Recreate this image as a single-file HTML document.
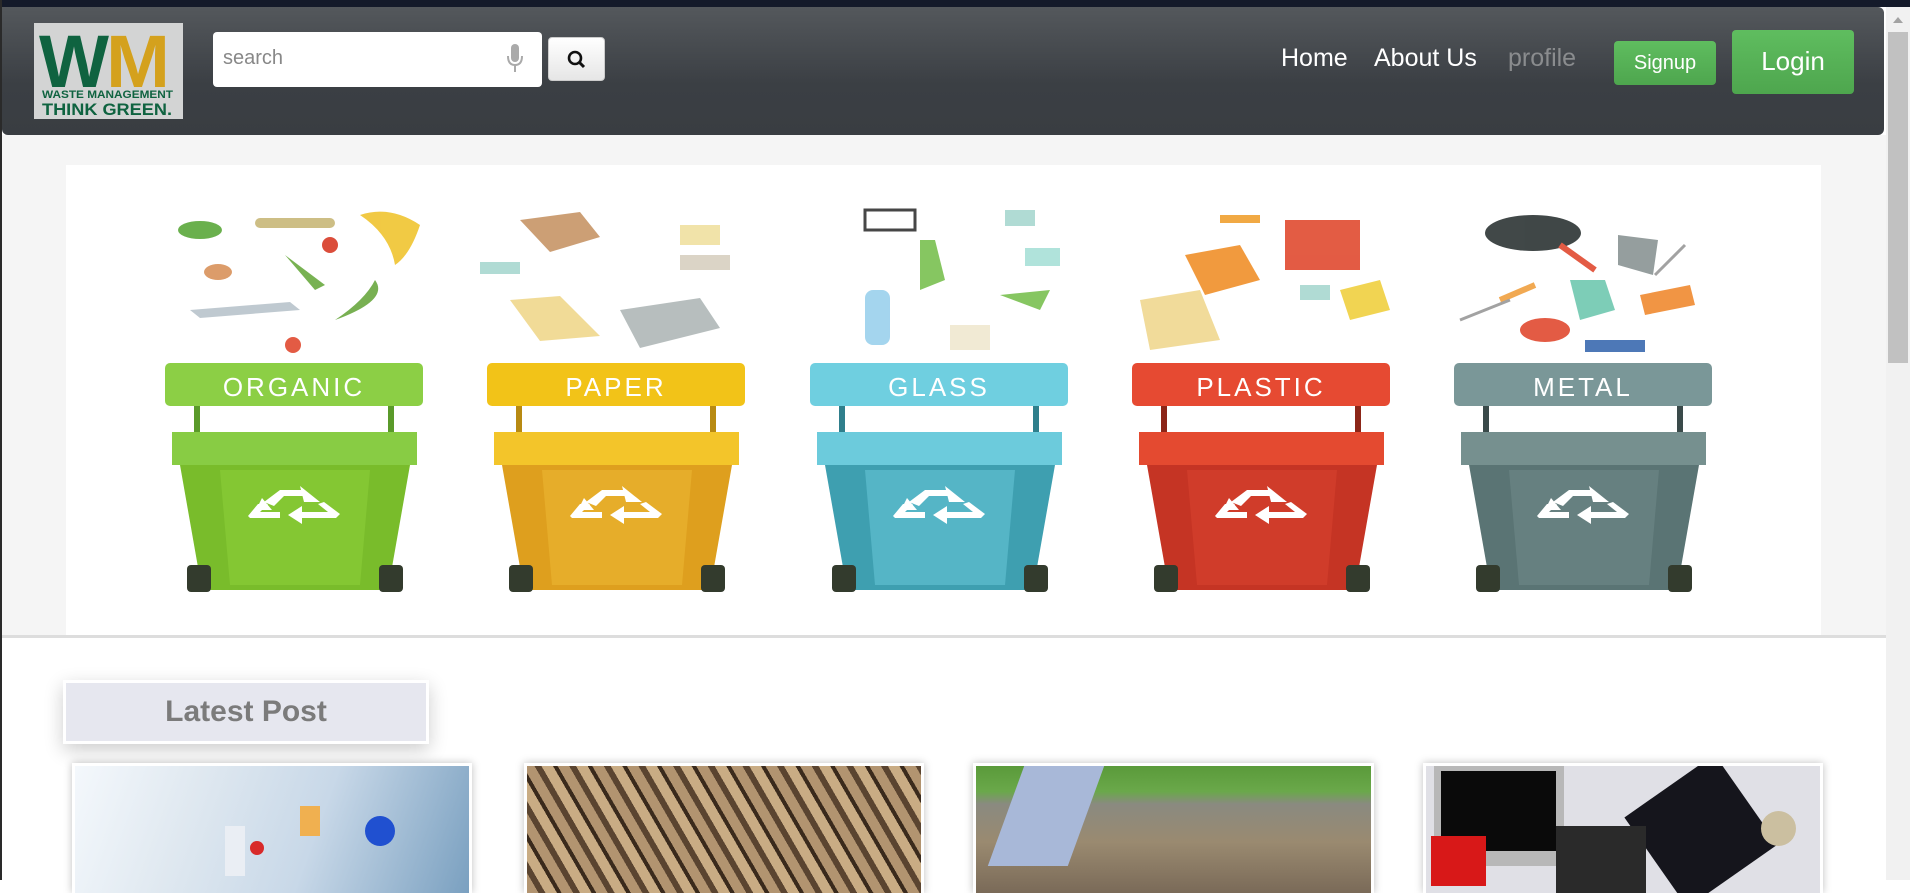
<!DOCTYPE html>
<html><head><meta charset="utf-8"><style>
*{margin:0;padding:0;box-sizing:border-box}
body{width:1910px;height:880px;overflow:hidden;background:#fff;font-family:"Comic Sans MS","Liberation Sans",sans-serif;position:relative}
.abs{position:absolute}
.top{left:0;top:0;width:1910px;height:7px;background:#141a2a}
.lb{left:0;top:0;width:2px;height:880px;background:#2a2a2a}
.hdr{left:2px;top:7px;width:1882px;height:128px;background:linear-gradient(#54585c,#3b3f44 60%,#393d42);border-radius:0 0 6px 6px;border-top-right-radius:6px}
.logo{left:34px;top:23px;width:149px;height:96px;background:#d3d4d4}
.search{left:213px;top:32px;width:329px;height:55px;background:#fff;border-radius:4px;font:20px "Liberation Sans",sans-serif;color:#888;padding:15px 10px}
.sbtn{left:548px;top:37px;width:57px;height:44px;background:linear-gradient(#fff,#e6e6e6);border-radius:4px;border:1px solid #ccc}
.nav{top:44px;font-size:25px;color:#fff}
.btn{background:linear-gradient(#5fbd5f,#4ea64e);color:#fff;border-radius:4px;text-align:center}
.sb{left:1886px;top:7px;width:24px;height:873px;background:#f1f1f1}
.thumb{left:1888px;top:32px;width:20px;height:331px;background:#c1c1c1}
.card{background:#fff;box-shadow:0 0 8px rgba(0,0,0,.25);padding:3px 3px 0 3px;height:130px}
.card>div{width:100%;height:127px;position:relative;overflow:hidden}
</style></head><body>
<div class="abs top"></div>
<div class="abs hdr"></div>
<div class="abs logo">
<svg width="149" height="96" viewBox="0 0 149 96">
<text x="5" y="64" font-family="Liberation Sans" font-weight="bold" font-size="74" fill="#0f6340" textLength="70" lengthAdjust="spacingAndGlyphs">W</text>
<text x="72" y="64" font-family="Liberation Sans" font-weight="bold" font-size="74" fill="#d4a11d" textLength="64" lengthAdjust="spacingAndGlyphs">M</text>
<text x="8" y="75" font-family="Liberation Sans" font-weight="bold" font-size="11" fill="#0f6340" textLength="131" lengthAdjust="spacingAndGlyphs">WASTE MANAGEMENT</text>
<text x="8" y="92" font-family="Liberation Sans" font-weight="bold" font-size="17" fill="#0f6340" textLength="130" lengthAdjust="spacingAndGlyphs">THINK GREEN.</text>
</svg></div>
<div class="abs search">search
<svg class="abs" style="left:293px;top:12px" width="18" height="30" viewBox="0 0 18 30"><rect x="5" y="0" width="8" height="18" rx="4" fill="#aaa"/><path d="M2 12 q0 9 7 9 q7 0 7-9" stroke="#aaa" stroke-width="2" fill="none"/><rect x="8" y="21" width="2" height="7" fill="#aaa"/></svg></div>
<div class="abs sbtn"><svg class="abs" style="left:18px;top:12px" width="20" height="20" viewBox="0 0 20 20"><circle cx="8" cy="8" r="6" stroke="#111" stroke-width="2.6" fill="none"/><path d="M12 12l5 5" stroke="#111" stroke-width="3"/></svg></div>
<div class="abs nav" style="left:1281px">Home</div>
<div class="abs nav" style="left:1374px">About Us</div>
<div class="abs nav" style="left:1508px;color:#8a8c8e">profile</div>
<div class="abs btn" style="left:1614px;top:41px;width:102px;height:44px;font-size:20px;line-height:44px">Signup</div>
<div class="abs btn" style="left:1732px;top:30px;width:122px;height:64px;font-size:26px;line-height:62px">Login</div>
<div class="abs sb"></div><div class="abs thumb"></div>
<svg class="abs" style="left:1891px;top:15px" width="14" height="10"><path d="M2 8L7 2L12 8Z" fill="#a3a3a3"/></svg>
<div class="abs" style="left:2px;top:135px;width:1884px;height:500px;background:#f5f5f5"></div>
<div class="abs" style="left:66px;top:165px;width:1755px;height:470px;background:#fff"></div>
<div class="abs" style="left:2px;top:635px;width:1884px;height:3px;background:#ddd"></div>
<svg class="abs" style="left:0;top:160px" width="1886" height="440" viewBox="0 160 1886 440">
<defs>
<g id="rec" fill="#fff">
<path d="M-30 -2 L-14 -14 L8 -14 L14 -8 L-10 -8 L-20 2Z"/>
<path d="M6 -18 L26 -2 L10 -2Z"/>
<path d="M-46 12 L-36 0 L-26 0 L-34 8 L-14 8 L-14 14 L-44 14Z"/>
<path d="M-32 -6 L-22 6 L-38 6Z"/>
<path d="M30 -2 L46 10 L42 14 L4 14 L4 8 L34 8 L24 0Z"/>
<path d="M-6 11 L8 2 L8 20Z"/>
</g>
<g id="bin">
<rect x="172" y="432" width="245" height="33"/>
</g>
</defs>
<g transform="translate(0,0)">
<rect x="165" y="363" width="258" height="43" rx="5" fill="#8ccf45"/>
<rect x="194" y="406" width="6" height="28" fill="#5a9a2a"/><rect x="388" y="406" width="6" height="28" fill="#5a9a2a"/>
<rect x="172" y="432" width="245" height="33" fill="#88cc44"/>
<path d="M180 465 L410 465 L388 590 L202 590Z" fill="#79bc2b"/>
<path d="M220 470 L370 470 L360 585 L230 585Z" fill="#84c733"/>
<rect x="187" y="565" width="24" height="27" rx="4" fill="#333b2d"/><rect x="379" y="565" width="24" height="27" rx="4" fill="#333b2d"/>
<use href="#rec" x="294" y="504"/>
<text x="294" y="396" text-anchor="middle" font-family="Liberation Sans" font-size="26" fill="#fff" letter-spacing="3">ORGANIC</text>
</g>
<g transform="translate(322,0)">
<rect x="165" y="363" width="258" height="43" rx="5" fill="#f2c318"/>
<rect x="194" y="406" width="6" height="28" fill="#b88a12"/><rect x="388" y="406" width="6" height="28" fill="#b88a12"/>
<rect x="172" y="432" width="245" height="33" fill="#f3c52a"/>
<path d="M180 465 L410 465 L388 590 L202 590Z" fill="#de9f1e"/>
<path d="M220 470 L370 470 L360 585 L230 585Z" fill="#e6ad2a"/>
<rect x="187" y="565" width="24" height="27" rx="4" fill="#333b2d"/><rect x="379" y="565" width="24" height="27" rx="4" fill="#333b2d"/>
<use href="#rec" x="294" y="504"/>
<text x="294" y="396" text-anchor="middle" font-family="Liberation Sans" font-size="26" fill="#fff" letter-spacing="3">PAPER</text>
</g>
<g transform="translate(645,0)">
<rect x="165" y="363" width="258" height="43" rx="5" fill="#6fcfe0"/>
<rect x="194" y="406" width="6" height="28" fill="#2f7f8c"/><rect x="388" y="406" width="6" height="28" fill="#2f7f8c"/>
<rect x="172" y="432" width="245" height="33" fill="#6ccbdc"/>
<path d="M180 465 L410 465 L388 590 L202 590Z" fill="#3e9fb0"/>
<path d="M220 470 L370 470 L360 585 L230 585Z" fill="#55b5c6"/>
<rect x="187" y="565" width="24" height="27" rx="4" fill="#333b2d"/><rect x="379" y="565" width="24" height="27" rx="4" fill="#333b2d"/>
<use href="#rec" x="294" y="504"/>
<text x="294" y="396" text-anchor="middle" font-family="Liberation Sans" font-size="26" fill="#fff" letter-spacing="3">GLASS</text>
</g>
<g transform="translate(967,0)">
<rect x="165" y="363" width="258" height="43" rx="5" fill="#e64a32"/>
<rect x="194" y="406" width="6" height="28" fill="#8c2618"/><rect x="388" y="406" width="6" height="28" fill="#8c2618"/>
<rect x="172" y="432" width="245" height="33" fill="#e44a30"/>
<path d="M180 465 L410 465 L388 590 L202 590Z" fill="#c53424"/>
<path d="M220 470 L370 470 L360 585 L230 585Z" fill="#d03c2a"/>
<rect x="187" y="565" width="24" height="27" rx="4" fill="#333b2d"/><rect x="379" y="565" width="24" height="27" rx="4" fill="#333b2d"/>
<use href="#rec" x="294" y="504"/>
<text x="294" y="396" text-anchor="middle" font-family="Liberation Sans" font-size="26" fill="#fff" letter-spacing="3">PLASTIC</text>
</g>
<g transform="translate(1289,0)">
<rect x="165" y="363" width="258" height="43" rx="5" fill="#7a9798"/>
<rect x="194" y="406" width="6" height="28" fill="#3a4a4a"/><rect x="388" y="406" width="6" height="28" fill="#3a4a4a"/>
<rect x="172" y="432" width="245" height="33" fill="#76908f"/>
<path d="M180 465 L410 465 L388 590 L202 590Z" fill="#5a7474"/>
<path d="M220 470 L370 470 L360 585 L230 585Z" fill="#668080"/>
<rect x="187" y="565" width="24" height="27" rx="4" fill="#333b2d"/><rect x="379" y="565" width="24" height="27" rx="4" fill="#333b2d"/>
<use href="#rec" x="294" y="504"/>
<text x="294" y="396" text-anchor="middle" font-family="Liberation Sans" font-size="26" fill="#fff" letter-spacing="3">METAL</text>
</g>
<g opacity=".9">
<ellipse cx="200" cy="230" rx="22" ry="9" fill="#5aa83a"/><rect x="255" y="218" width="80" height="10" rx="5" fill="#c8b878"/><path d="M360 215 q30-10 60 10 q-10 30-25 40 q-5-30-35-50z" fill="#f0c430"/>
<ellipse cx="218" cy="272" rx="14" ry="8" fill="#d9925a"/><circle cx="330" cy="245" r="8" fill="#d83a26"/><path d="M285 255 l40 30 l-10 5z" fill="#6aaa40"/>
<path d="M190 310 l100 -8 l10 8 l-100 8z" fill="#b9c4cc"/><path d="M335 320 q30-20 40-40 q15 20-40 40z" fill="#6aa840"/><circle cx="293" cy="345" r="8" fill="#e04a30"/>
<path d="M520 220 l60-8 l20 25 l-50 15z" fill="#c69566"/><rect x="480" y="262" width="40" height="12" fill="#a8d8d0"/><path d="M510 300 l50-4 l40 40 l-60 5z" fill="#f0d88c"/><path d="M620 310 l80-12 l20 30 l-80 20z" fill="#b0b8b8"/><rect x="680" y="225" width="40" height="20" fill="#f0e0a0"/><rect x="680" y="255" width="50" height="15" fill="#d8d0c0"/>
<rect x="865" y="210" width="50" height="20" fill="none" stroke="#333" stroke-width="3"/><rect x="1005" y="210" width="30" height="16" fill="#a8d8d0"/><path d="M920 240 l15 0 l10 40 l-25 10z" fill="#7ac050"/><rect x="865" y="290" width="25" height="55" rx="8" fill="#9ad0ec"/><rect x="950" y="325" width="40" height="25" fill="#f0e8d0"/><path d="M1000 295 l50-5 l-10 20z" fill="#7ac050"/><rect x="1025" y="248" width="35" height="18" fill="#a8e0d8"/>
<rect x="1285" y="220" width="75" height="50" fill="#e04a30"/><path d="M1185 255 l55-10 l20 35 l-55 15z" fill="#f0902a"/><path d="M1140 300 l60-10 l20 50 l-70 10z" fill="#f0d890"/><path d="M1340 290 l40-10 l10 30 l-40 10z" fill="#f0d040"/><rect x="1220" y="215" width="40" height="8" fill="#f0a030"/><rect x="1300" y="285" width="30" height="15" fill="#a8d8d0"/>
<ellipse cx="1533" cy="233" rx="48" ry="18" fill="#2c3434"/><path d="M1560 245 l35 25" stroke="#e04a30" stroke-width="6"/><path d="M1618 235 l40 5 l-5 35 l-35-10z" fill="#8a9494"/><path d="M1570 280 l35 0 l10 30 l-35 10z" fill="#70c8b0"/><path d="M1640 295 l50-10 l5 20 l-50 10z" fill="#f08a30"/><ellipse cx="1545" cy="330" rx="25" ry="12" fill="#e04a30"/><rect x="1585" y="340" width="60" height="12" fill="#3a6ab0"/><path d="M1500 300 l35-15" stroke="#f0a040" stroke-width="6"/><path d="M1460 320 l50-20" stroke="#999" stroke-width="3"/><path d="M1655 275 l30-30" stroke="#999" stroke-width="3"/>
</g>
</svg>
<div class="abs" style="left:63px;top:680px;width:366px;height:64px;background:#e6e7ef;border:3px solid #fff;box-shadow:0 6px 18px rgba(0,0,0,.2);text-align:center;font-size:30px;line-height:58px;color:#7b7b7b;font-weight:bold">Latest Post</div>
<div class="abs card" style="left:72px;top:763px;width:400px"><div style="background:linear-gradient(110deg,#f4f8fc 0%,#dfe8f0 30%,#c8d8e8 60%,#7aa0c0 100%)">
<div class="abs" style="left:150px;top:60px;width:20px;height:50px;background:#eaeef4"></div><div class="abs" style="left:175px;top:75px;width:14px;height:14px;border-radius:50%;background:#d82a2a"></div><div class="abs" style="left:290px;top:50px;width:30px;height:30px;border-radius:50%;background:#2050d0"></div><div class="abs" style="left:225px;top:40px;width:20px;height:30px;background:#f0b050"></div></div></div>
<div class="abs card" style="left:524px;top:763px;width:400px"><div style="background:repeating-linear-gradient(60deg,#b29470 0 10px,#5a4430 10px 16px,#c9ac84 16px 26px,#3a2a1c 26px 30px)"></div></div>
<div class="abs card" style="left:973px;top:763px;width:401px"><div style="background:linear-gradient(#5a9a3a 0%,#6aa84a 20%,#8a8a80 30%,#9a8a70 60%,#7a6a58 100%)"><div class="abs" style="left:30px;top:0;width:80px;height:100px;background:#a8b8d8;transform:skewX(-20deg)"></div></div></div>
<div class="abs card" style="left:1423px;top:763px;width:400px"><div style="background:#e0e0e6">
<div class="abs" style="left:8px;top:0;width:130px;height:100px;background:#b8b8b8"></div><div class="abs" style="left:15px;top:5px;width:115px;height:80px;background:#0a0a0a"></div><div class="abs" style="left:5px;top:70px;width:55px;height:50px;background:#d81818"></div><div class="abs" style="left:220px;top:10px;width:110px;height:110px;background:#15151c;transform:rotate(-35deg)"></div><div class="abs" style="left:130px;top:60px;width:90px;height:67px;background:#2a2a2a"></div><div class="abs" style="left:335px;top:45px;width:35px;height:35px;border-radius:50%;background:#cbbfa0"></div></div></div>
<div class="abs lb"></div>
</body></html>
